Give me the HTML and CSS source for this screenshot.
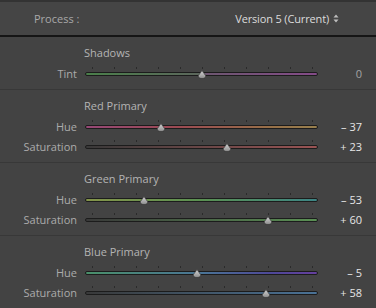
FILE: index.html
```html
<!DOCTYPE html>
<html lang="en">

<head>
	<meta charset="utf-8">
	<title>HSL / Calibration</title>
	<link rel="stylesheet" href="styles.css">
</head>

<body>
	<div class="panel">
		<div class="header">
			<span class="process-label">Process :</span>
			<span class="version">Version 5 (Current)
				<svg class="updown" width="6" height="9" viewBox="0 0 6 9">
					<path d="M3 0.5 L5.5 3.5 L0.5 3.5 Z M3 8.5 L5.5 5.5 L0.5 5.5 Z" fill="#bdbdbd" />
				</svg>
			</span>
		</div>

		<!-- shadows -->
		<section class="group">
			<div class="group-title">Shadows</div>
			<div class="row">
				<span class="label">Tint</span>
				<div class="slider">
					<div class="ticks"></div>
					<div class="track tint"></div>
					<svg class="thumb" style="left: 117px" width="10" height="9" viewBox="0 0 10 9"><use href="#drop" /></svg>
				</div>
				<span class="value zero">0</span>
			</div>
		</section>

		<!-- red primary -->
		<section class="group">
			<div class="group-title">Red Primary</div>
			<div class="row">
				<span class="label">Hue</span>
				<div class="slider">
					<div class="ticks"></div>
					<div class="track red-hue"></div>
					<svg class="thumb" style="left: 76.3px" width="10" height="9" viewBox="0 0 10 9"><use href="#drop" /></svg>
				</div>
				<span class="value">&ndash; 37</span>
			</div>
			<div class="row">
				<span class="label">Saturation</span>
				<div class="slider">
					<div class="ticks"></div>
					<div class="track red-sat"></div>
					<svg class="thumb" style="left: 142.3px" width="10" height="9" viewBox="0 0 10 9"><use href="#drop" /></svg>
				</div>
				<span class="value">+ 23</span>
			</div>
		</section>

		<!-- green primary -->
		<section class="group">
			<div class="group-title">Green Primary</div>
			<div class="row">
				<span class="label">Hue</span>
				<div class="slider">
					<div class="ticks"></div>
					<div class="track green-hue"></div>
					<svg class="thumb" style="left: 58.7px" width="10" height="9" viewBox="0 0 10 9"><use href="#drop" /></svg>
				</div>
				<span class="value">&ndash; 53</span>
			</div>
			<div class="row">
				<span class="label">Saturation</span>
				<div class="slider">
					<div class="ticks"></div>
					<div class="track green-sat"></div>
					<svg class="thumb" style="left: 183px" width="10" height="9" viewBox="0 0 10 9"><use href="#drop" /></svg>
				</div>
				<span class="value">+ 60</span>
			</div>
		</section>

		<!-- blue primary -->
		<section class="group">
			<div class="group-title">Blue Primary</div>
			<div class="row">
				<span class="label">Hue</span>
				<div class="slider">
					<div class="ticks"></div>
					<div class="track blue-hue"></div>
					<svg class="thumb" style="left: 111.5px" width="10" height="9" viewBox="0 0 10 9"><use href="#drop" /></svg>
				</div>
				<span class="value">&ndash; 5</span>
			</div>
			<div class="row">
				<span class="label">Saturation</span>
				<div class="slider">
					<div class="ticks"></div>
					<div class="track blue-sat"></div>
					<svg class="thumb" style="left: 180.8px" width="10" height="9" viewBox="0 0 10 9"><use href="#drop" /></svg>
				</div>
				<span class="value">+ 58</span>
			</div>
		</section>
	</div>

	<svg class="defs" width="0" height="0">
		<defs>
			<linearGradient id="dropfill" x1="0" y1="0" x2="0" y2="1">
				<stop offset="0" stop-color="#d6d6d6" />
				<stop offset="1" stop-color="#8c8c8c" />
			</linearGradient>
			<path id="drop" d="M5 0.6 L8.6 5.6 Q9.2 8.5 5 8.5 Q0.8 8.5 1.4 5.6 Z" fill="url(#dropfill)" stroke="#2e2e2e" stroke-width="0.6" />
		</defs>
	</svg>
</body>

</html>
```

FILE: styles.css
```css
body {
	margin: 0;
	background: #434343;
	font-family: "Open Sans", "DejaVu Sans", sans-serif;
	font-size: 11px;
	overflow: hidden;
}

.panel {
	width: 376px;
	border-top: 2px solid #333333;
}

.header {
	height: 33px;
	display: flex;
	align-items: center;
	justify-content: space-between;
	padding: 0 37px 0 34px;
	border-bottom: 2px solid #151515;
	background: #454545;
}

.process-label {
	color: #a9a9a9;
}

.version {
	color: #dcdcdc;
	display: flex;
	align-items: center;
	gap: 4px;
	letter-spacing: -0.15px;
}

.group {
	padding: 6px 0;
	border-bottom: 1px solid #383838;
}

.group-title {
	height: 20px;
	line-height: 20px;
	padding-left: 84px;
	color: #b4b4b4;
}

.row {
	height: 20px;
	display: grid;
	grid-template-columns: 77px 233px 36px;
	column-gap: 8px;
	align-items: center;
}

.label {
	text-align: right;
	color: #ababab;
}

.slider {
	position: relative;
	height: 20px;
	display: flex;
	align-items: center;
}

.ticks {
	position: absolute;
	left: 7px;
	top: 4px;
	width: 221px;
	height: 2px;
	background: repeating-linear-gradient(to right, #2a2a2a 0 1px, transparent 1px 22px);
}

.track {
	flex: 1;
	height: 2px;
	border: 1px solid #1c1c1c;
	border-radius: 2px;
	margin-top: 1px;
}

.thumb {
	position: absolute;
	top: 7px;
	margin-left: -5px;
}

.defs {
	position: absolute;
}

.value {
	text-align: right;
	color: #e6e6e6;
}

.value.zero {
	color: #a3a3a3;
}

.tint {
	background: linear-gradient(to right, #4a7f4a, #5c665c 50%, #6d5670 52%, #844b88);
}

.red-hue {
	background: linear-gradient(to right, #964876, #9c4a52 40%, #977048 80%, #98804e);
}

.red-sat {
	background: linear-gradient(to right, #393939, #9a5454);
}

.green-hue {
	background: linear-gradient(to right, #84944a, #5a9052 50%, #3d8585);
}

.green-sat {
	background: linear-gradient(to right, #393939, #5a9054);
}

.blue-hue {
	background: linear-gradient(to right, #4a906a, #4a7496 50%, #4e4898 80%, #653f9e);
}

.blue-sat {
	background: linear-gradient(to right, #393939, #4a7296);
}
```
